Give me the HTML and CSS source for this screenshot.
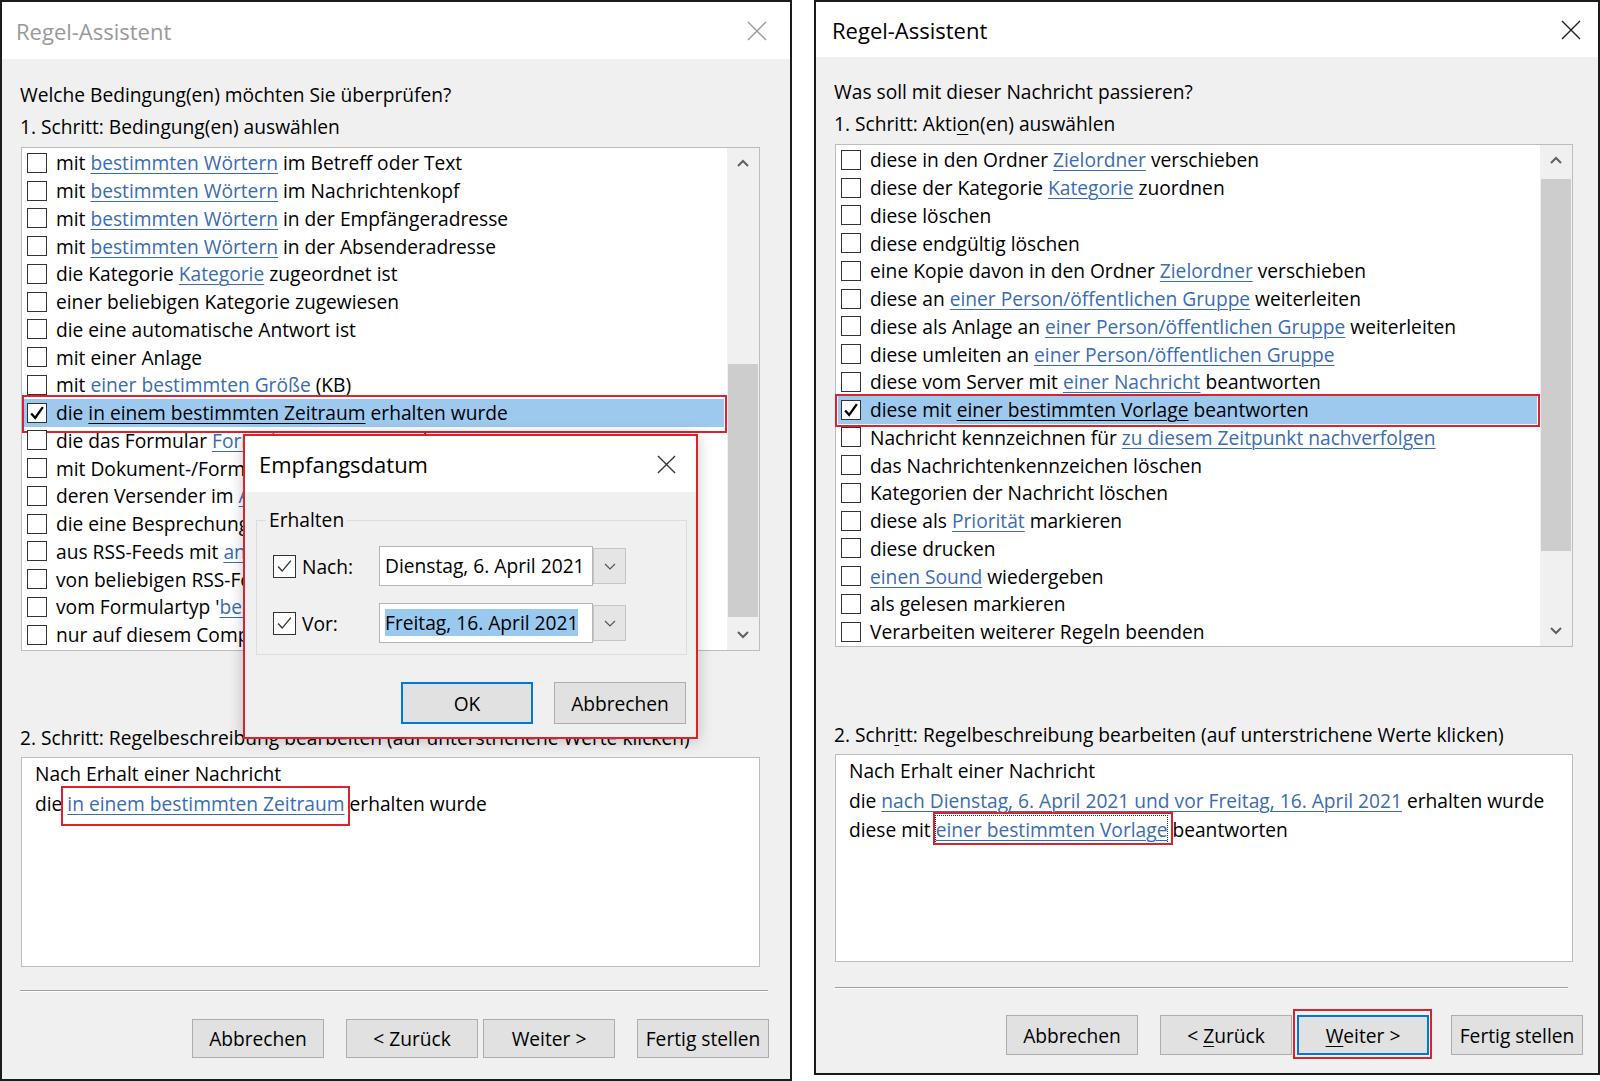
FILE: index.html
```html
<!DOCTYPE html>
<html lang="de">
<head>
    <meta charset="UTF-8">
    <title>Regel-Assistent</title>
    <link rel="stylesheet" href="styles.css">
</head>
<body>
<div class="screen">

    <!-- linkes Fenster: Bedingungen -->
    <div class="dialog left inactive">
        <div class="titlebar">
            <span class="title">Regel-Assistent</span>
            <svg class="close" viewBox="0 0 20 20"><path d="M1 1L19 19M19 1L1 19"/></svg>
        </div>
        <div class="body">
            <p class="label">Welche Bedingung(en) möchten Sie überprüfen?</p>
            <p class="label">1. Schritt: Bedingung(en) auswählen</p>
            <div class="listbox">
                <ul class="rows">
                    <li><i class="cb"></i><span>mit <a>bestimmten Wörtern</a> im Betreff oder Text</span></li>
                    <li><i class="cb"></i><span>mit <a>bestimmten Wörtern</a> im Nachrichtenkopf</span></li>
                    <li><i class="cb"></i><span>mit <a>bestimmten Wörtern</a> in der Empfängeradresse</span></li>
                    <li><i class="cb"></i><span>mit <a>bestimmten Wörtern</a> in der Absenderadresse</span></li>
                    <li><i class="cb"></i><span>die Kategorie <a>Kategorie</a> zugeordnet ist</span></li>
                    <li><i class="cb"></i><span>einer beliebigen Kategorie zugewiesen</span></li>
                    <li><i class="cb"></i><span>die eine automatische Antwort ist</span></li>
                    <li><i class="cb"></i><span>mit einer Anlage</span></li>
                    <li><i class="cb"></i><span>mit <a>einer bestimmten Größe</a> (KB)</span></li>
                    <li class="sel"><i class="cb"><svg viewBox="0 0 20 20"><path d="M3.5 10.5L8 15.5L16.5 3.5"/></svg></i><span>die <a>in einem bestimmten Zeitraum</a> erhalten wurde</span></li>
                    <li><i class="cb"></i><span>die das Formular <a>Formularname</a> verwendet</span></li>
                    <li><i class="cb"></i><span>mit Dokument-/Formulareigenschaften</span></li>
                    <li><i class="cb"></i><span>deren Versender im <a>Adressbuch</a> ist</span></li>
                    <li><i class="cb"></i><span>die eine Besprechungsanfrage ist</span></li>
                    <li><i class="cb"></i><span>aus RSS-Feeds mit <a>angegebenem Text</a></span></li>
                    <li><i class="cb"></i><span>von beliebigen RSS-Feeds</span></li>
                    <li><i class="cb"></i><span>vom Formulartyp '<a>bestimmter</a>'</span></li>
                    <li><i class="cb"></i><span>nur auf diesem Computer</span></li>
                </ul>
                <div class="scrollbar">
                    <div class="arrow"><svg viewBox="0 0 14 10"><polyline points="2,8 7,3 12,8"/></svg></div>
                    <div class="track"><div class="thumb"></div></div>
                    <div class="arrow"><svg viewBox="0 0 14 10"><polyline points="2,2 7,7 12,2"/></svg></div>
                </div>
            </div>
            <p class="label step2">2. Schritt: Regelbeschreibung bearbeiten (auf unterstrichene Werte klicken)</p>
            <div class="desc">
                <div>Nach Erhalt einer Nachricht</div>
                <div>die <a class="mark">in einem bestimmten Zeitraum</a> erhalten wurde</div>
            </div>
            <div class="sep"></div>
            <div class="buttons">
                <button>Abbrechen</button>
                <button class="back">&lt; Zurück</button>
                <button class="next">Weiter &gt;</button>
                <button>Fertig stellen</button>
            </div>
        </div>

        <!-- Unterdialog liegt über dem Assistenten -->
        <div class="popup">
            <div class="pop-title">
                <span class="title">Empfangsdatum</span>
                <svg class="close" viewBox="0 0 20 20"><path d="M1 1L19 19M19 1L1 19"/></svg>
            </div>
            <fieldset>
                <legend>Erhalten</legend>
                <div class="field-row">
                    <i class="pcb"><svg viewBox="0 0 23 23"><path d="M4.5 11.5L9 16.5L18.5 5"/></svg></i>
                    <span class="flabel">Nach:</span>
                    <span class="date">Dienstag, 6. April 2021</span>
                    <span class="drop"><svg viewBox="0 0 12 7"><polyline points="1,1 6,6 11,1"/></svg></span>
                </div>
                <div class="field-row">
                    <i class="pcb"><svg viewBox="0 0 23 23"><path d="M4.5 11.5L9 16.5L18.5 5"/></svg></i>
                    <span class="flabel">Vor:</span>
                    <span class="date"><span class="selected">Freitag, 16. April 2021</span></span>
                    <span class="drop"><svg viewBox="0 0 12 7"><polyline points="1,1 6,6 11,1"/></svg></span>
                </div>
            </fieldset>
            <div class="pop-buttons">
                <button class="default">OK</button>
                <button>Abbrechen</button>
            </div>
        </div>
    </div>

    <!-- rechtes Fenster: Aktionen -->
    <div class="dialog right">
        <div class="titlebar">
            <span class="title">Regel-Assistent</span>
            <svg class="close" viewBox="0 0 20 20"><path d="M1 1L19 19M19 1L1 19"/></svg>
        </div>
        <div class="body">
            <p class="label">Was soll mit dieser Nachricht passieren?</p>
            <p class="label">1. Schritt: Akti<u>o</u>n(en) auswählen</p>
            <div class="listbox">
                <ul class="rows">
                    <li><i class="cb"></i><span>diese in den Ordner <a>Zielordner</a> verschieben</span></li>
                    <li><i class="cb"></i><span>diese der Kategorie <a>Kategorie</a> zuordnen</span></li>
                    <li><i class="cb"></i><span>diese löschen</span></li>
                    <li><i class="cb"></i><span>diese endgültig löschen</span></li>
                    <li><i class="cb"></i><span>eine Kopie davon in den Ordner <a>Zielordner</a> verschieben</span></li>
                    <li><i class="cb"></i><span>diese an <a>einer Person/öffentlichen Gruppe</a> weiterleiten</span></li>
                    <li><i class="cb"></i><span>diese als Anlage an <a>einer Person/öffentlichen Gruppe</a> weiterleiten</span></li>
                    <li><i class="cb"></i><span>diese umleiten an <a>einer Person/öffentlichen Gruppe</a></span></li>
                    <li><i class="cb"></i><span>diese vom Server mit <a>einer Nachricht</a> beantworten</span></li>
                    <li class="sel"><i class="cb"><svg viewBox="0 0 20 20"><path d="M3.5 10.5L8 15.5L16.5 3.5"/></svg></i><span>diese mit <a>einer bestimmten Vorlage</a> beantworten</span></li>
                    <li><i class="cb"></i><span>Nachricht kennzeichnen für <a>zu diesem Zeitpunkt nachverfolgen</a></span></li>
                    <li><i class="cb"></i><span>das Nachrichtenkennzeichen löschen</span></li>
                    <li><i class="cb"></i><span>Kategorien der Nachricht löschen</span></li>
                    <li><i class="cb"></i><span>diese als <a>Priorität</a> markieren</span></li>
                    <li><i class="cb"></i><span>diese drucken</span></li>
                    <li><i class="cb"></i><span><a>einen Sound</a> wiedergeben</span></li>
                    <li><i class="cb"></i><span>als gelesen markieren</span></li>
                    <li><i class="cb"></i><span>Verarbeiten weiterer Regeln beenden</span></li>
                </ul>
                <div class="scrollbar">
                    <div class="arrow"><svg viewBox="0 0 14 10"><polyline points="2,8 7,3 12,8"/></svg></div>
                    <div class="track"><div class="thumb"></div></div>
                    <div class="arrow"><svg viewBox="0 0 14 10"><polyline points="2,2 7,7 12,2"/></svg></div>
                </div>
            </div>
            <p class="label step2">2. Schr<u>i</u>tt: Regelbeschreibung bearbeiten (auf unterstrichene Werte klicken)</p>
            <div class="desc">
                <div>Nach Erhalt einer Nachricht</div>
                <div>die <a>nach Dienstag, 6. April 2021 und vor Freitag, 16. April 2021</a> erhalten wurde</div>
                <div>diese mit <a class="mark focus">einer bestimmten Vorlage</a> beantworten</div>
            </div>
            <div class="sep"></div>
            <div class="buttons">
                <button>Abbrechen</button>
                <button class="back">&lt; <u>Z</u>urück</button>
                <button class="next default mark"><u>W</u>eiter &gt;</button>
                <button>Fertig stellen</button>
            </div>
        </div>
    </div>

</div>
</body>
</html>
```

FILE: styles.css
```css
* {
    box-sizing: border-box;
}
body {
    margin: 0;
    background: #fff;
    font-family: "Open Sans", "Noto Sans", sans-serif;
    font-size: 19.2px;
    color: #000;
}
.screen {
    display: flex;
    align-items: flex-start;
    gap: 22px;
}

/* Fenster */
.dialog {
    position: relative;
    display: flex;
    flex-direction: column;
    border: 2px solid #1c1c1c;
    background: #f0f0f0;
}
.dialog.left { width: 792px; height: 1081px; }
.dialog.right { width: 786px; height: 1075px; }

.titlebar {
    display: flex;
    align-items: center;
    justify-content: space-between;
    background: #fff;
}
.left .titlebar { height: 57px; padding: 0 23px 0 14px; }
.right .titlebar { height: 55px; padding: 0 17px 0 16px; }
.title {
    font-size: 22px;
}
.inactive .titlebar .title { color: #999; }
.close {
    width: 20px;
    height: 20px;
    fill: none;
    stroke: #222;
    stroke-width: 1.4;
}
.inactive .titlebar .close { stroke: #9a9a9a; }

.body {
    flex: 1;
    padding-left: 18px;
}
.left .body { padding-top: 20px; }
.right .body { padding-top: 19px; }

.label {
    margin: 0;
    line-height: 32px;
    white-space: nowrap;
}
u { text-decoration-thickness: 1px; text-underline-offset: 3px; }

/* Liste mit Kontrollkästchen */
.listbox {
    display: flex;
    margin: 4px 0 0 1px;
    border: 1px solid #bdbdbd;
    background: #fff;
}
.left .listbox { width: 739px; height: 504px; }
.right .listbox { width: 738px; height: 503px; }

.rows {
    flex: 1;
    list-style: none;
    margin: 0 3px 0 2px;
    padding: 1px 0 0;
}
.rows li {
    position: relative;
    display: flex;
    align-items: center;
    height: 27.75px;
    padding-left: 3px;
    white-space: nowrap;
}
.cb {
    flex: none;
    width: 20px;
    height: 20px;
    margin-right: 9px;
    border: 1px solid #333;
    background: #fff;
}
.cb svg {
    display: block;
    width: 18px;
    height: 18px;
    fill: none;
    stroke: #000;
    stroke-width: 2.6;
}
a {
    color: #3a6cb2;
    text-decoration: underline;
    text-decoration-thickness: 1px;
    text-underline-offset: 3px;
}
.rows li.sel {
    background: #9dc9ef;
}
.rows li.sel a { color: #000; }
.rows li.sel::after {
    content: '';
    position: absolute;
    border: 2px solid #d9232e;
}
.left .rows li.sel::after { left: -2px; right: -3px; top: -4px; bottom: -6px; }
.right .rows li.sel::after { left: -3px; right: -3px; top: -2px; bottom: -3px; }

.scrollbar {
    display: flex;
    flex-direction: column;
    width: 32px;
    background: #f0f0f0;
}
.arrow {
    display: flex;
    align-items: center;
    justify-content: center;
    height: 30px;
}
.arrow svg {
    width: 14px;
    height: 10px;
    fill: none;
    stroke: #606060;
    stroke-width: 2;
}
.track { flex: 1; }
.thumb {
    margin: 0 1px;
    background: #cdcdcd;
}
.left .thumb { margin-top: 186px; height: 253px; }
.right .thumb { margin-top: 4px; height: 372px; }

/* Regelbeschreibung */
.left .step2 { margin-top: 71px; }
.right .step2 { margin-top: 72px; }
.desc {
    margin: 3px 0 0 1px;
    padding: 1px 13px;
    border: 1px solid #bdbdbd;
    background: #fff;
    white-space: nowrap;
}
.left .desc { width: 739px; height: 210px; line-height: 30px; }
.right .desc { width: 738px; height: 208px; line-height: 29.5px; }

.mark {
    position: relative;
}
.mark::after {
    content: '';
    position: absolute;
    border: 2px solid #d9232e;
}
.left .desc .mark::after { left: -6px; right: -5px; top: -4px; bottom: -9px; }
.right .desc .mark::after { left: -3px; right: -6px; top: -4px; bottom: -2px; }
.focus {
    outline: 1px dotted #333;
}

.sep {
    height: 2px;
    border-top: 1px solid #a0a0a0;
    border-bottom: 1px solid #fff;
}
.left .sep { width: 748px; margin-top: 23px; }
.right .sep { width: 733px; margin: 25px 0 0 1px; }

/* Schaltflächen */
.buttons {
    display: flex;
    justify-content: flex-end;
}
.left .buttons { margin-top: 27px; padding-right: 21px; }
.right .buttons { margin-top: 26px; padding-right: 15px; }
button {
    width: 132px;
    padding: 0;
    border: 1px solid #adadad;
    background: #e1e1e1;
    font-family: inherit;
    font-size: 19.2px;
    color: #000;
}
.left .buttons button { height: 39px; }
.right .buttons button { height: 40px; }
.buttons button + button { margin-left: 22px; }
.buttons .back + .next { margin-left: 5px; }
button.default {
    border: 2px solid #0078d7;
}
.buttons .mark::after { left: -6px; right: -5px; top: -8px; bottom: -6px; }

/* Empfangsdatum */
.popup {
    position: absolute;
    left: 241px;
    top: 432px;
    width: 455px;
    height: 305px;
    display: flex;
    flex-direction: column;
    border: 2px solid #d9232e;
    background: #f0f0f0;
    box-shadow: 0 2px 14px rgba(0,0,0,0.22);
}
.pop-title {
    display: flex;
    align-items: center;
    justify-content: space-between;
    height: 56px;
    padding: 0 20px 0 14px;
    background: #fff;
}
.pop-title .close { width: 19px; height: 19px; stroke: #333; }
fieldset {
    margin: 15px 9px 0 11px;
    padding: 13px 0 11px 16px;
    border: 1px solid #dcdcdc;
}
legend {
    margin-left: -7px;
    padding: 0 3px;
    line-height: 26px;
}
.field-row {
    display: flex;
    align-items: center;
    height: 40px;
}
.field-row + .field-row { margin-top: 17px; }
.pcb {
    flex: none;
    width: 23px;
    height: 23px;
    border: 1px solid #333;
    background: #fff;
}
.pcb svg {
    display: block;
    width: 21px;
    height: 21px;
    fill: none;
    stroke: #333;
    stroke-width: 1.5;
}
.flabel {
    width: 77px;
    margin-left: 6px;
}
.date {
    width: 214px;
    height: 40px;
    padding-left: 5px;
    line-height: 38px;
    border: 1px solid #b5b5b5;
    background: #fff;
    white-space: nowrap;
}
.selected { background: #99c9ef; }
.drop {
    display: flex;
    align-items: center;
    justify-content: center;
    width: 33px;
    height: 36px;
    border: 1px solid #c5c5c5;
    background: #e5e5e5;
}
.drop svg {
    width: 12px;
    height: 7px;
    fill: none;
    stroke: #555;
    stroke-width: 1.2;
}
.pop-buttons {
    display: flex;
    justify-content: flex-end;
    gap: 21px;
    margin-top: 27px;
    padding-right: 10px;
}
.pop-buttons button { height: 42px; }
```
